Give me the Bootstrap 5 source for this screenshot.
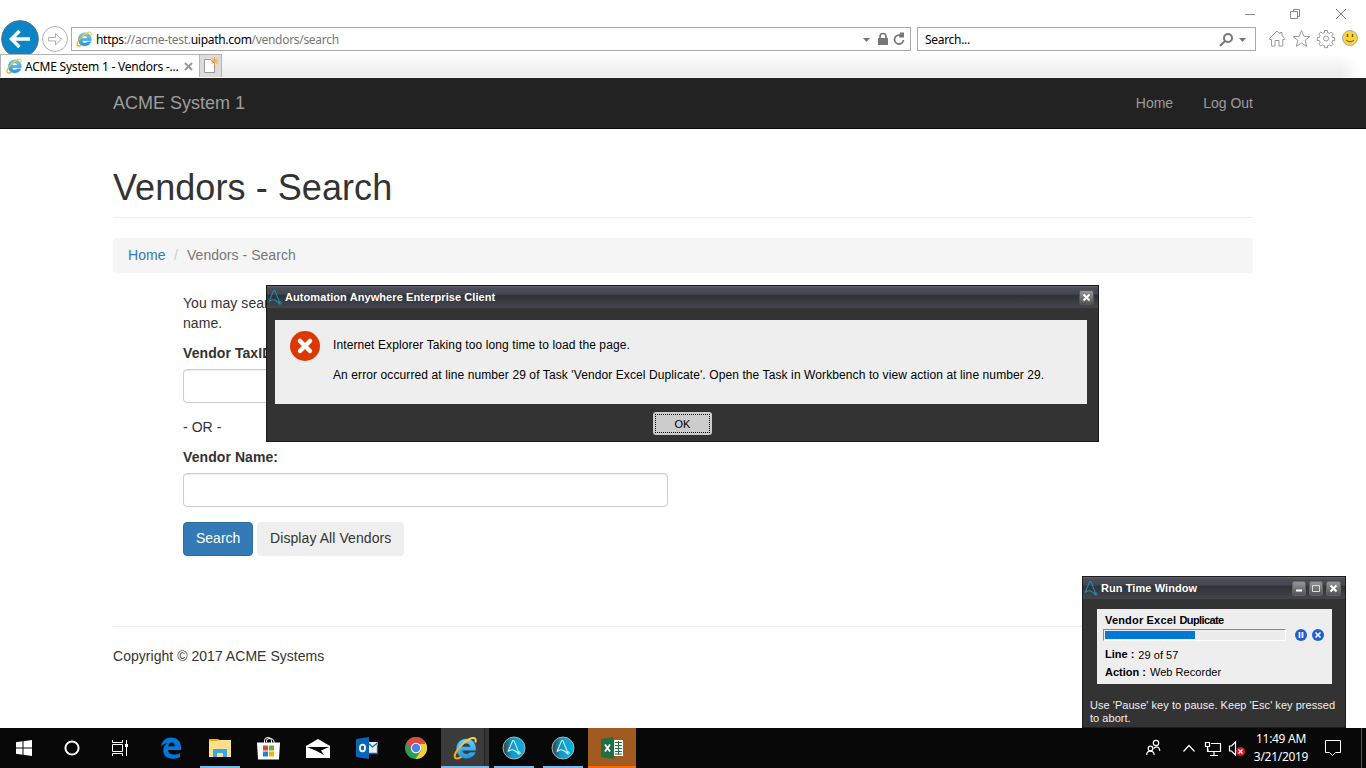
<!DOCTYPE html>
<html lang="en">
<head>
<meta charset="utf-8">
<meta name="viewport" content="width=device-width, initial-scale=1">
<title>ACME System 1 - Vendors - Search</title>
<link href="https://cdn.jsdelivr.net/npm/bootstrap@5.3.0/dist/css/bootstrap.min.css" rel="stylesheet">
<style>
html,body{height:768px;overflow:hidden}
body{font:14px/20px "Liberation Sans",Arial,sans-serif;color:#333;background:#fff}
svg{display:block;flex:none}
.seg{font-family:"Noto Sans","Open Sans",sans-serif;font-size:12px;letter-spacing:-.3px;color:#000}
.chrome{height:78px}
.win-ctl{height:20px;padding-left:1245px}
.addr-row{height:34px}
.addr,.find{height:24px;border:1px solid #aaa;background:#fff}
.addr{width:840px;margin-left:3px}
.find{width:339px;margin-left:6px}
.url{width:764px;color:#777;padding:2px 0 0 4px}
.url b{font-weight:400;color:#000}
.tools{margin-left:6px}
.tab-row{height:24px;background:linear-gradient(90deg,rgba(255,255,255,0) 1340px,#fff 1360px),linear-gradient(#fff 0,#f7f7f7 30%,#ebebeb 92%,#f6f6f6 100%)}
.tab-on{width:199px;height:23px;border-top:1px solid #b4b4b4;border-left:1px solid #b4b4b4;background:#fff}
.tab-label{width:162px;padding:1px 0 0 3px;letter-spacing:-.22px}
.tab-new{width:23px;height:23px;background:#dcdcdc;border:1px solid #b4b4b4;border-bottom:0}
.site-nav{height:51px;background:#222;border-bottom:1px solid #080808;padding:0}
.site-nav a{color:#9d9d9d;text-decoration:none}
.page-box{max-width:1170px;padding:0 15px}
.brand-name{font-size:18px}
h1{font-size:36px;line-height:40px;font-weight:400;margin:39px 0 0;padding-bottom:9px;height:50px;border-bottom:1px solid #eee;color:#333;letter-spacing:.07px}
.crumbs{background:#f5f5f5;border-radius:4px;padding:8px 15px;height:35px;margin:20px 0;line-height:19px}
.crumbs .breadcrumb-item{color:#777;padding:0;letter-spacing:.04px}
.crumbs .breadcrumb-item a{color:#337ab7;text-decoration:none}
.crumbs .breadcrumb-item+.breadcrumb-item::before{color:#ccc;padding:0 9px 0 8.500px}
.search-form{width:485px;margin-left:70px;letter-spacing:.06px}
.search-form label{font-weight:700;margin-bottom:6px;display:block;letter-spacing:.08px}
.search-form p{margin-bottom:10px}
.search-form .form-control{height:34px;border:1px solid #ccc;border-radius:4px;box-shadow:inset 0 1px 1px rgba(0,0,0,.075);margin-bottom:14px}
.search-form .form-actions{margin-top:15px}
.search-form .btn{font-size:14px;line-height:18px;padding:6px 12px 8px;height:34px;border-radius:4px}
.btn-go{background:#337ab7;border:1px solid #2e6da4;color:#fff;width:70px}
.btn-all{background:#efefef;border:1px solid #f0f0f0;color:#333;letter-spacing:.08px}
.foot{margin-top:70px;border-top:1px solid #eee;padding-top:19px;letter-spacing:.035px}
.aa-win{position:absolute;background:#333;border:1px solid #1c1c1e;font-size:11px;line-height:13px;color:#000}
.aa-title{height:22px;background:linear-gradient(#666975 0,#4c4e59 8%,#44464f 38%,#303136 40%,#44464c 100%);color:#fff;font-weight:700;letter-spacing:.08px}
.aa-logo{color:#1790b8;margin:1px 0 0 1px}
.aa-panel{background:#eee}
.err-win{left:266px;top:285px;width:833px;height:157px}
.err-win .aa-panel{margin:12px 11px 0 8px;height:84px;font-size:12px;padding:11px 0 0 15px;letter-spacing:.1px}
.err-win p{margin:0;line-height:14px}
.btn-okay{width:59px;height:23px;margin:8px 0 0 386px;padding:2px;background:#ccc;border-radius:3px;border:0;font-size:11px;line-height:13px;color:#000}
.btn-okay span{display:block;height:19px;padding-top:3px;border:1px dotted #000}
.run-win{left:1082px;top:576px;width:264px;height:152px}
.run-win .aa-panel{width:235px;height:75px;margin:10px 0 0 14px;padding:5px 0 0 7px}
.run-win .val{padding-left:4px;letter-spacing:.04px}
.meter{width:183px;height:12px;background:#ececec;border:1px solid;border-color:#888 #fff #fff #888;padding:1px;margin:2px 8px 0 -1px}
.meter div{height:8px;background:#0078d7}
.taskbar{height:40px;background:#080808}
.slot{width:49px;height:40px;padding-right:2px;display:flex;align-items:center;justify-content:center}
.slot-sys{width:48px;padding-right:0}
.live{position:relative}
.live::after{content:"";position:absolute;left:4px;right:5px;bottom:0;height:2px;background:#76b9ed}
.tile-ie{background:linear-gradient(90deg,#3b3b3b 0 43px,#242424 43px 44px,#353535 44px 48px,#080808 48px)}
.tile-ie::after{left:0;right:1px}
.tile-xl{background:#a05a20}
.tile-xl::after{left:0;right:0;background:#ff6a00}
.clock{width:72px;color:#fff;line-height:18px;text-align:center}
</style>
</head>
<body class="d-flex flex-column">
<svg width="0" height="0" style="position:absolute">
<defs>
<linearGradient id="gold" x1="0" y1="1" x2="1" y2="0"><stop offset="0" stop-color="#f3a712"/><stop offset="1" stop-color="#ffd83c"/></linearGradient>
<linearGradient id="sky" x1="0" y1="0" x2="0" y2="1"><stop offset="0" stop-color="#6fd0fa"/><stop offset="1" stop-color="#2094dc"/></linearGradient>
<linearGradient id="key" x1="0" y1="0" x2="0" y2="1"><stop offset="0" stop-color="#999"/><stop offset="1" stop-color="#505050"/></linearGradient>
<linearGradient id="round" x1="0" y1="0" x2="1" y2="0"><stop offset="0" stop-color="#333b44"/><stop offset=".4" stop-color="#139bc4"/><stop offset="1" stop-color="#08b2df"/></linearGradient>
<symbol id="ie" viewBox="0 0 24 24">
<path d="M23 14.500H9.300c.3 2.300 2 3.400 4.200 3.400 1.700 0 2.800-.6 3.600-1.600h5.500c-1.500 4-4.900 6.200-9.200 6.200-5.900 0-10-4-10-9.700C3.400 7 7.600 2.800 13.300 2.800c6.100 0 9.900 4.400 9.700 11.700zM17.300 10.800c-.3-2.100-1.900-3.300-4-3.300-2.200 0-3.800 1.200-4.200 3.300z" fill="url(#sky)" stroke="#1679c0" stroke-width=".4"/>
<path d="M22.300 6.500c.6-1.900.4-3.500-.6-4.200C19.400.8 13.200 4 8 9.600 3 15 .6 20.200 2.300 21.900c1.100 1 3.600.4 6.200-1.100" fill="none" stroke="url(#gold)" stroke-width="2"/>
</symbol>
<symbol id="aa" viewBox="0 0 16 18"><path d="M1 13.500L5.800 2.200q.9-1.600 1.900.1L12.500 14.500M1 13.500q3.500-3.200 6.500-1.500 3.500 2 5 3.500" fill="none" stroke="currentColor" stroke-width="1.100"/><circle cx="12.800" cy="14.800" r="1.300" fill="none" stroke="currentColor"/></symbol>
</defs>
</svg>

<header class="chrome">
<div class="win-ctl d-flex">
<svg width="104" height="20" fill="none" stroke="#888"><path d="M0 14.500h10M48.500 11.500v-2h6v7h-2M45.500 11.500h7v7h-7zM91 9l10 10m0-10L91 19"/></svg>
</div>
<div class="addr-row d-flex align-items-center">
<svg width="40" height="34" viewBox="0 0 40 34"><circle cx="20" cy="19" r="18.300" fill="#0a85c7" stroke="#5b6b74"/><path d="M30 19H13M19.500 11l-8 8 8 8" fill="none" stroke="#fff" stroke-width="3.500"/></svg>
<svg width="28" height="34" viewBox="40 0 28 34" fill="none" stroke="#b0b0b0"><circle cx="55" cy="19" r="12.500"/><path d="M48.500 17.500h7v-4l6 5.700-6 5.700v-4h-7z"/></svg>
<div class="addr seg d-flex align-items-center mt-1">
<svg width="16" height="16" class="ms-1"><use href="#ie"/></svg>
<div class="url"><b>https</b>://acme-test.<b>uipath.com</b>/vendors/search</div>
<svg width="50" height="22" fill="#777"><path d="M7 10h7l-3.500 4z"/><path d="M22 10h10v7H22z"/><path d="M24 11V8.500a3 3 0 0 1 6 0V11M47.500 12a4.500 4.500 0 1 1-2-4.200" fill="none" stroke="#777" stroke-width="1.700"/><path d="M44 4.500h4v5h-5z"/></svg>
</div>
<div class="find seg d-flex align-items-center justify-content-between mt-1">
<span style="padding:2px 0 0 7px">Search...</span>
<svg width="40" height="22" fill="none" stroke="#777" stroke-width="2"><circle cx="13" cy="10" r="4"/><path d="M10 13l-5 5"/><path d="M24 10h7l-3.500 4z" fill="#777" stroke="none"/></svg>
</div>
<svg width="98" height="34" viewBox="1262 20 98 34" class="tools" fill="none" stroke="#999">
<path d="M1269.500 38.500l7.500-7.500 3 2.800v-1.300h2v3.200l2.800 2.800v1h-2v6.500h-3.800v-5.500h-4v5.500h-3.500v-6.500h-2z"/>
<path d="M1301.500 30.500l2.300 5.800 6 .3-4.700 3.800 1.600 6-5.200-3.300-5.200 3.300 1.600-6-4.700-3.800 6-.3z"/>
<circle cx="1326" cy="38.500" r="2.500"/>
<path d="M1324.500 30.500h3v2l2 .8 1.700-1.300 2 2-1.300 1.700.8 1.800h2v3h-2l-.8 2 1.300 1.600-2 2-1.700-1.200-2 .8v2h-3v-2l-2-.8-1.700 1.200-2-2 1.300-1.600-.8-2h-2v-3h2l.8-1.800-1.300-1.700 2-2 1.700 1.300 2-.8z"/>
<circle cx="1350" cy="38" r="7.500" fill="#fbd23a" stroke="#aaa"/><path d="M1347.500 34v3m5-3v3" stroke="#6b5a20" stroke-width="1.400"/><path d="M1346 40q4 3.500 8 0" stroke="#6b5a20"/>
</svg>
</div>
<div class="tab-row d-flex">
<div class="tab-on seg d-flex align-items-center">
<svg width="16" height="16" style="margin-left:5px"><use href="#ie"/></svg><span class="tab-label text-nowrap">ACME System 1 - Vendors -...</span>
<svg width="9" height="9" stroke="#999" stroke-width="2"><path d="M1 1l7 7M8 1L1 8"/></svg>
</div>
<div class="tab-new"><svg width="21" height="22" fill="none"><path d="M4.500 4.500h6l4 4v9h-10z" fill="#fff" stroke="#999"/><path d="M14.500 2v8M10.500 6h8M11.700 3.200l5.600 5.600m0-5.600l-5.600 5.600" stroke="#eba63a"/></svg></div>
</div>
</header>

<nav class="navbar site-nav">
<div class="container page-box">
<a class="brand-name" href="#">ACME System 1</a>
<div class="d-flex" style="gap:30px"><a href="#">Home</a><a href="#">Log Out</a></div>
</div>
</nav>

<main class="container page-box flex-grow-1">
<h1>Vendors - Search</h1>
<ol class="breadcrumb crumbs"><li class="breadcrumb-item"><a href="#">Home</a></li><li class="breadcrumb-item">Vendors - Search</li></ol>
<form class="search-form">
<p>You may search<br>name.</p>
<label for="tax">Vendor TaxID:</label>
<input id="tax" class="form-control" type="text">
<p>- OR -</p>
<label for="nm">Vendor Name:</label>
<input id="nm" class="form-control" type="text">
<div class="form-actions d-flex gap-1"><button type="button" class="btn btn-go">Search</button><button type="button" class="btn btn-all">Display All Vendors</button></div>
</form>
<footer class="foot">Copyright © 2017 ACME Systems</footer>
</main>

<footer class="taskbar d-flex">
<div class="slot slot-sys"><svg width="16" height="16" fill="#fff"><path d="M0 2.300L6.500 1.300V7.500H0zM7.500 1.200L16 0v7.500H7.500zM0 8.500h6.500v6.200L0 13.700zM7.500 8.500H16V16l-8.500-1.200z"/></svg></div>
<div class="slot slot-sys"><svg width="16" height="16"><circle cx="8" cy="8" r="6.600" fill="none" stroke="#fff" stroke-width="2"/></svg></div>
<div class="slot slot-sys"><svg width="17" height="16" fill="none" stroke="#fff"><path d="M.5 0v2.500h10V0M.5 4.500h10v7H.5zM.5 16v-2.500h10V16M14.500 0v16"/><path d="M13 4h3v3h-3z" fill="#fff" stroke="none"/></svg></div>
<div class="slot" style="margin-left:3px"><svg width="20" height="22" viewBox="0 0 20 22"><path d="M0 9.500C1 3.500 5 .5 10.300.5 16.500.5 20 5 20 10v3H7c.2 3 2.500 4.500 6 4.500 2.400 0 4.300-.6 6-1.600v4c-2 1.200-4.500 1.800-7.300 1.800C6 21.700 2.200 18.500 2.200 13.500 2.200 10 4 7.500 7 6 4 6.300 1.500 7.500 0 9.500zM7.200 9.200h6.600C13.800 7 12.600 5.500 10.600 5.500S7.600 7 7.200 9.200z" fill="#0078d7"/></svg></div>
<div class="slot live"><svg width="22" height="18"><path d="M0 0h9l1 1h12v17H0z" fill="#ffe08a"/><path d="M0 0h9v2H0z" fill="#f5b400"/><path d="M4 10h14v8h-4v-4H8v4H4z" fill="#35a9e8"/></svg></div>
<div class="slot"><svg width="23" height="23"><path d="M7.500 6V3.500q0-3 3.500-3t3.500 3V6M9.500 5V3.500Q9.500 1.500 13 1.500T17 4v2" fill="none" stroke="#fff"/><path d="M0 5.500h23l-1 17H1z" fill="#fff"/><path d="M6 8.500h5v5H6z" fill="#d9472b"/><path d="M12 8.500h5v5h-5z" fill="#76a82a"/><path d="M6 14.500h5v5H6z" fill="#1f87d6"/><path d="M12 14.500h5v5h-5z" fill="#f4b400"/></svg></div>
<div class="slot"><svg width="24" height="19"><path d="M0 7L12 0l12 7v12H0z" fill="#fff"/><path d="M1 8h22l-8 3.500 3 4.500L9.500 11.500z" fill="#080808"/></svg></div>
<div class="slot"><svg width="22" height="22"><path d="M11 5h11v12H11z" fill="#eaf3fb"/><path d="M12 6l4.500 4L22 5.500M12 16.500h9.500v-9" fill="none" stroke="#0a65b8" stroke-width="1.300"/><path d="M0 2L13 0v22L0 20z" fill="#0a65b8"/><ellipse cx="6.500" cy="11" rx="2.600" ry="3.300" fill="none" stroke="#fff" stroke-width="1.800"/></svg></div>
<div class="slot"><svg width="22" height="22" viewBox="0 0 22 22"><circle cx="11" cy="11" r="11" fill="#28a054"/><path d="M1.500 5.500l5 8.500L11 6l9.500-.5A11 11 0 0 0 1.500 5.500z" fill="#e04b3d"/><path d="M20.500 5.500A11 11 0 0 1 10.500 22L16 13.500 15 6z" fill="#fbcb35"/><path d="M11 5.500h9.500L20 7h-7z" fill="#e04b3d"/><circle cx="11" cy="11" r="5.200" fill="#fff"/><circle cx="11" cy="11" r="4.200" fill="#4a83ee"/></svg></div>
<div class="slot live tile-ie"><svg width="24" height="24"><use href="#ie"/></svg></div>
<div class="slot live"><svg width="24" height="24"><circle cx="12" cy="12" r="11" fill="url(#round)" stroke="#aab4b8"/><svg x="5" y="3" width="15" height="17" color="#d9f4fc"><use href="#aa"/></svg></svg></div>
<div class="slot live"><svg width="24" height="24"><circle cx="12" cy="12" r="11" fill="url(#round)" stroke="#aab4b8"/><svg x="5" y="3" width="15" height="17" color="#d9f4fc"><use href="#aa"/></svg></svg></div>
<div class="slot slot-sys live tile-xl"><svg width="23" height="22"><path d="M12 3h10v16H12z" fill="#fff"/><path d="M14 5.500h7M14 8.500h7M14 11.500h7M14 14.500h7M14 17h7M17.500 4v14" stroke="#217346"/><path d="M0 2L13 0v22L0 20z" fill="#1e7145"/><path d="M4 7.500l5 7M9 7.500l-5 7" stroke="#fff" stroke-width="1.800"/></svg></div>
<div class="ms-auto d-flex align-items-center">
<svg width="101" height="40" viewBox="1144 728 101 40" fill="none" stroke="#fff" stroke-width="1.200">
<circle cx="1156" cy="743" r="2.700"/><path d="M1153.500 748.500q2.500-2.700 4.700-1.200 1.600 1.200 1.600 3.700"/><circle cx="1150.500" cy="748.500" r="2.300"/><path d="M1146.700 755q0-3.900 3.700-3.900t3.700 3.900"/>
<path d="M1183.500 751.500l5.500-6 5.500 6"/>
<path d="M1211 743.500h9.500v8H1208v-3M1214 752v3M1210 755.500h8M1205.500 742.500h4v4h-4zM1207.500 747v5"/>
<path d="M1229.500 746v5h2l4 4v-13l-4 4z"/><circle cx="1240.500" cy="751.500" r="4.500" fill="#e81123" stroke="none"/><path d="M1238.500 749.500l4 4m0-4l-4 4"/>
</svg>
<div class="clock seg"><div>11:49 AM</div><div>3/21/2019</div></div>
<svg width="49" height="40" viewBox="1317 728 49 40" fill="none" stroke="#fff"><path d="M1325.500 740.500h15v12h-5l-3 3-3-3h-4z"/><path d="M1361.500 728v40" stroke="#555"/></svg>
</div>
</footer>

<section class="aa-win err-win">
<div class="aa-title d-flex align-items-center"><svg width="15" height="17" class="aa-logo"><use href="#aa"/></svg><span class="ps-1 flex-grow-1" style="margin-left:-2px">Automation Anywhere Enterprise Client</span><svg width="15" height="15" style="margin-right:4px"><rect x=".5" y=".5" width="14" height="14" rx="2" fill="url(#key)" stroke="#555"/><path d="M4.500 4.500l6 6m0-6l-6 6" stroke="#fff" stroke-width="2"/></svg></div>
<div class="aa-panel d-flex">
<svg width="30" height="30"><circle cx="15" cy="15" r="15" fill="#dc3900"/><path d="M10 10l10 10M20 10L10 20" stroke="#fff" stroke-width="4.500" stroke-linecap="round"/></svg>
<div style="padding:7px 0 0 13px"><p>Internet Explorer Taking too long time to load the page.</p><p style="margin-top:16px">An error occurred at line number 29 of Task 'Vendor Excel Duplicate'. Open the Task in Workbench to view action at line number 29.</p></div>
</div>
<button type="button" class="btn-okay d-block"><span>OK</span></button>
</section>

<section class="aa-win run-win">
<div class="aa-title d-flex align-items-center"><svg width="15" height="17" class="aa-logo"><use href="#aa"/></svg><span class="flex-grow-1" style="padding-left:2px">Run Time Window</span>
<svg width="49" height="15" style="margin-right:4px" stroke="#fff"><g fill="url(#key)" stroke="#666"><rect x=".5" y=".5" width="13" height="14" rx="2"/><rect x="17.500" y=".5" width="13" height="14" rx="2"/><rect x="34.500" y=".5" width="14" height="14" rx="2"/></g><path d="M4 9.500h6" stroke-width="2"/><path d="M20.500 4.500h7v6h-7z" fill="none" stroke="#ddd"/><path d="M38.500 4.500l6 6m0-6l-6 6" stroke-width="2"/></svg></div>
<div class="aa-panel">
<div class="fw-bold" style="height:13px;padding-left:1px"><span style="letter-spacing:.18px">Vendor Excel </span><span style="letter-spacing:-.6px">Duplicate</span></div>
<div class="d-flex align-items-center"><div class="meter"><div style="width:90px"></div></div>
<svg width="31" height="13"><circle cx="7" cy="7" r="6" fill="#1f5fd0"/><path d="M5.500 4v6M8.500 4v6" stroke="#fff" stroke-width="1.700"/><circle cx="24" cy="7" r="6" fill="#1f5fd0"/><path d="M21.500 4.500l5 5m0-5l-5 5" stroke="#fff" stroke-width="1.700"/></svg></div>
<div class="d-flex" style="padding:7px 0 0 1px"><b>Line :</b><span class="val" style="padding-top:1px;margin-bottom:-1px">29 of 57</span></div>
<div class="d-flex" style="padding:5px 0 0 1px"><b>Action :</b><span class="val">Web Recorder</span></div>
</div>
<div class="text-nowrap" style="padding:15px 0 0 7px;color:#f0f0f0;letter-spacing:.04px">Use 'Pause' key to pause. Keep 'Esc' key pressed<br>to abort.</div>
</section>
<script src="https://cdn.jsdelivr.net/npm/bootstrap@5.3.0/dist/js/bootstrap.bundle.min.js"></script>
</body>
</html>
